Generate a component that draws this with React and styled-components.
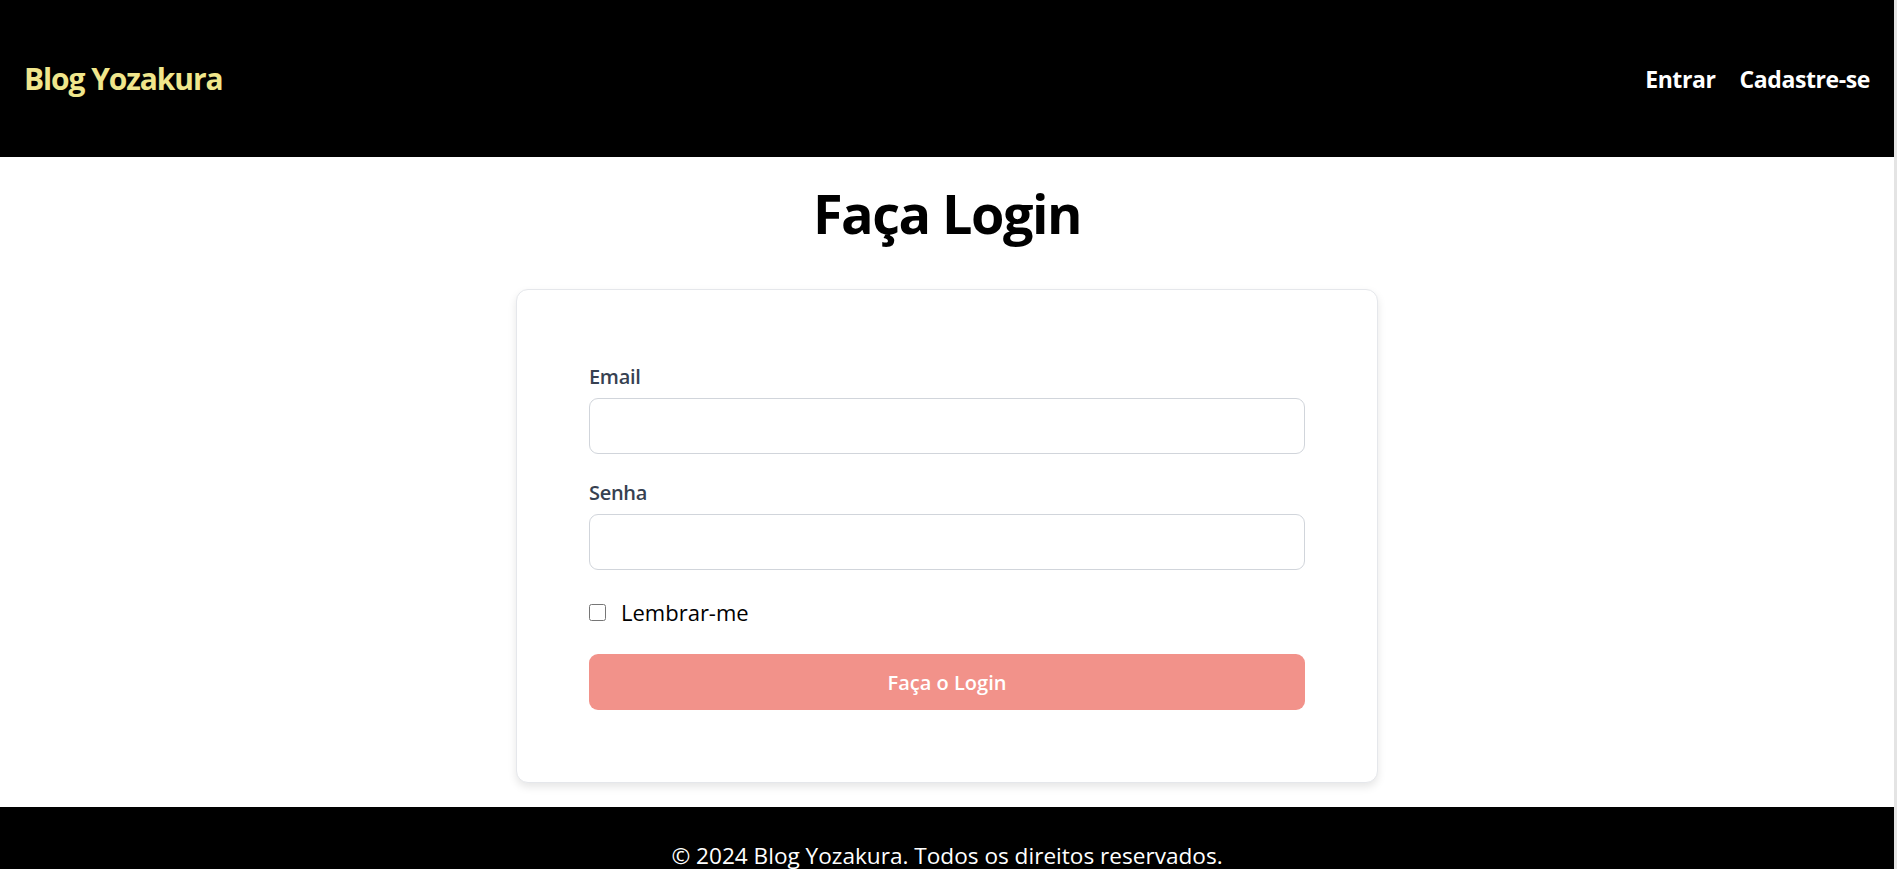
import React from 'react'
import styled, { createGlobalStyle } from 'styled-components'

const GlobalStyle = createGlobalStyle`
  html {
    scrollbar-width: none;
  }
  html::-webkit-scrollbar {
    display: none;
  }
  body {
    margin: 0;
    font-family: "Open Sans", "Noto Sans", sans-serif;
    background: #ffffff;
    color: #000000;
  }
  * {
    box-sizing: border-box;
  }
`

const Page = styled.div`
  display: flex;
  flex-direction: column;
  min-height: 100vh;
  border-right: 3px solid #e4e4e4;
`

const Header = styled.header`
  height: 157px;
  padding: 0 24px;
  background: #000000;
  display: flex;
  align-items: center;
  justify-content: space-between;
`

const Logo = styled.a`
  color: #f0e68c;
  font-size: 30px;
  font-weight: 700;
  letter-spacing: -1.1px;
  text-decoration: none;
`

const Nav = styled.nav`
  display: flex;
  gap: 24px;
`

const NavLink = styled.a`
  color: #ffffff;
  font-size: 23px;
  font-weight: 700;
  letter-spacing: -0.4px;
  text-decoration: none;
`

const Main = styled.main`
  flex: 1;
  display: flex;
  flex-direction: column;
  align-items: center;
  padding-bottom: 24px;
`

const Title = styled.h1`
  margin: 26px 0 46px;
  font-size: 54px;
  line-height: 60px;
  font-weight: 700;
  letter-spacing: -1.5px;
`

const Card = styled.form`
  width: 862px;
  padding: 72px;
  background: #ffffff;
  border: 1px solid #e5e7eb;
  border-radius: 12px;
  box-shadow: 0 4px 8px rgba(0, 0, 0, 0.1);
`

const Field = styled.div`
  margin-bottom: 24px;
`

const Label = styled.label`
  display: block;
  margin-bottom: 6px;
  color: #374151;
  font-size: 20px;
  line-height: 30px;
  font-weight: 600;
  letter-spacing: -0.3px;
`

const Input = styled.input`
  display: block;
  width: 100%;
  height: 56px;
  padding: 0 18px;
  border: 1px solid #d1d5db;
  border-radius: 9px;
  font-size: 21px;
  font-family: inherit;
  outline: none;
`

const CheckRow = styled.label`
  display: flex;
  align-items: center;
  gap: 15px;
  margin-bottom: 24px;
  font-size: 22px;
  line-height: 36px;
  color: #000000;
`

const Check = styled.input`
  width: 17px;
  height: 17px;
  margin: 0;
`

const Submit = styled.button`
  display: block;
  width: 100%;
  height: 56px;
  border: none;
  border-radius: 9px;
  background: #f2928a;
  color: #ffffff;
  font-family: inherit;
  font-size: 20px;
  font-weight: 600;
  cursor: pointer;
`

const Footer = styled.footer`
  padding: 31px 24px 24px;
  background: #000000;
  color: #ffffff;
  text-align: center;
  font-size: 22.6px;
  line-height: 36px;
`

export default function App() {
  return (
    <>
      <GlobalStyle />
      <Page>
        <Header>
          <Logo href="#">Blog Yozakura</Logo>
          <Nav>
            <NavLink href="#">Entrar</NavLink>
            <NavLink href="#">Cadastre-se</NavLink>
          </Nav>
        </Header>
        <Main>
          <Title>Faça Login</Title>
          <Card onSubmit={e => e.preventDefault()}>
            <Field>
              <Label htmlFor="email">Email</Label>
              <Input id="email" type="email" />
            </Field>
            <Field>
              <Label htmlFor="senha">Senha</Label>
              <Input id="senha" type="password" />
            </Field>
            <CheckRow>
              <Check type="checkbox" />
              Lembrar-me
            </CheckRow>
            <Submit type="submit">Faça o Login</Submit>
          </Card>
        </Main>
        <Footer>© 2024 Blog Yozakura. Todos os direitos reservados.</Footer>
      </Page>
    </>
  )
}
